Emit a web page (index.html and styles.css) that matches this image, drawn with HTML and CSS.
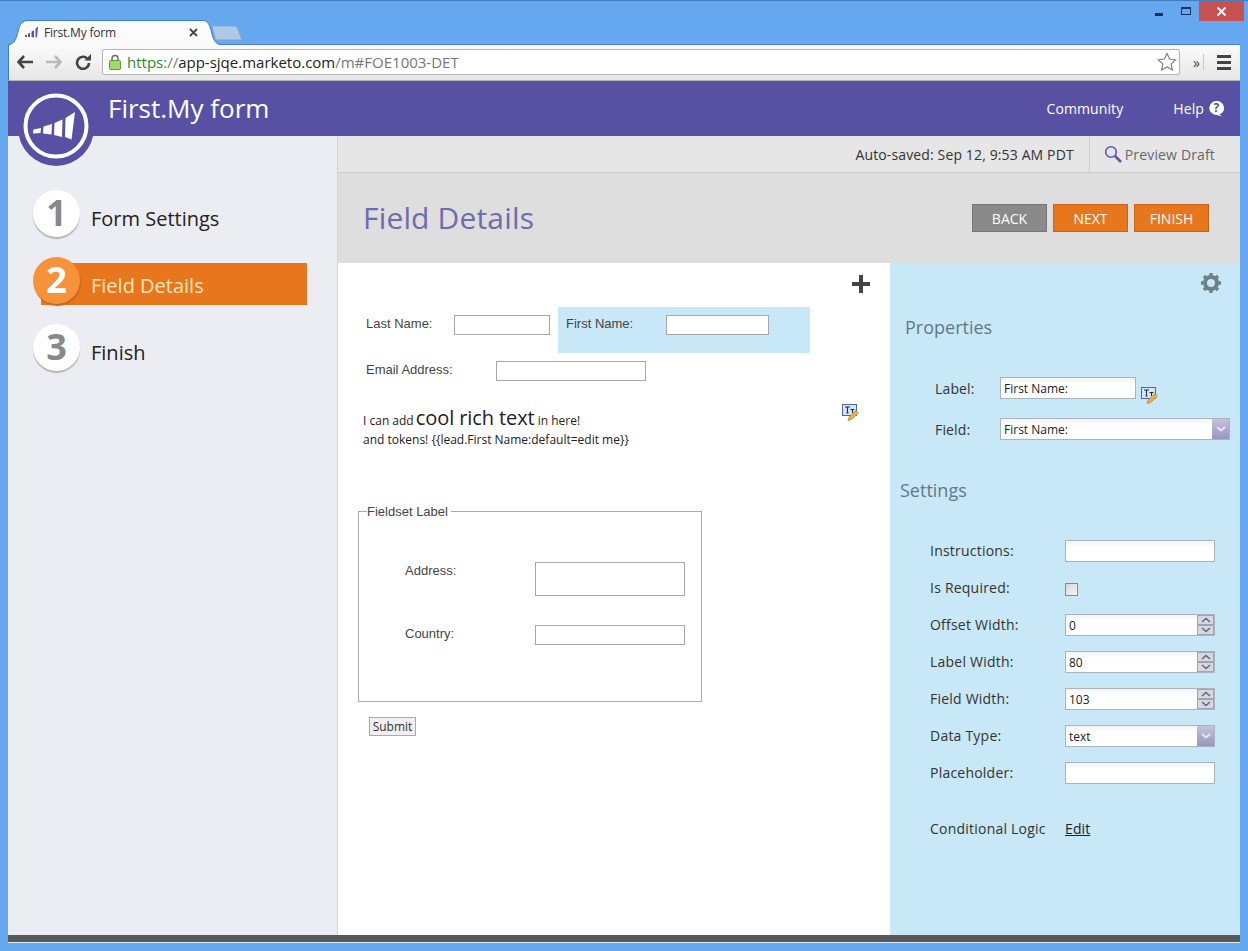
FILE: index.html
```html
<!DOCTYPE html>
<html lang="en">
<head>
<meta charset="utf-8">
<title>First.My form</title>
<link rel="stylesheet" href="styles.css">
</head>
<body>
<div class="window">
  <div class="tabstrip">
    <div class="tab">
      <svg class="tab-shape" width="214" height="25" viewBox="0 0 214 25"><path d="M0 25C6 24 8 20 10 12 12 3 14 .5 21 .5H194C199 .5 201 3 203 10 205 19 207 24 213 25" fill="#fbfbfb" stroke="#3f7fc0" stroke-width="1"/></svg>
      <svg class="tab-fav" width="14" height="14" viewBox="0 0 14 14"><path d="M0 10h2v2H0zM3 8.500l2-.5v4H3zM6.500 6.500l2.500-1v7l-2.500-.5zM10.500 3.500l2.500-2-1 11-1.500-.5z" fill="#5a54a4"/></svg>
      <span class="tab-title">First.My form</span>
      <svg class="tab-close" width="9" height="9" viewBox="0 0 9 9"><path d="M1 1l7 7M8 1L1 8" stroke="#444" stroke-width="1.800"/></svg>
    </div>
    <svg class="newtab" width="33" height="16" viewBox="0 0 33 16"><path d="M1 1H23C25 1 26 2 27 4L31 15H6C5 15 4.500 14 4 13Z" fill="#aec8e6" stroke="#7ea6d3"/></svg>
    <div class="winctl">
      <span class="win-min"></span>
      <span class="win-max"></span>
      <span class="win-close"><svg width="11" height="11" viewBox="0 0 11 11"><path d="M1.500 1.500l8 8M9.500 1.500l-8 8" stroke="#fff" stroke-width="2"/></svg></span>
    </div>
  </div>

  <div class="toolbar">
    <svg class="tb-back" width="16" height="14" viewBox="0 0 16 14"><path d="M7 1L1.500 7 7 13M2 7h14" fill="none" stroke="#444" stroke-width="2.600"/></svg>
    <svg class="tb-fwd" width="16" height="14" viewBox="0 0 16 14"><path d="M9 1l5.500 6L9 13M14 7H0" fill="none" stroke="#b9b9b9" stroke-width="2.600"/></svg>
    <svg class="tb-reload" width="16" height="16" viewBox="0 0 16 16"><path d="M13 5.500A6 6 0 1 0 14 9" fill="none" stroke="#444" stroke-width="2.600"/><path d="M9.500 6.500H16V0Z" fill="#444"/></svg>
    <div class="omnibox">
      <svg class="lock" width="12" height="16" viewBox="0 0 12 16"><path d="M3 7V4.500a3 3 0 0 1 6 0V7" fill="none" stroke="#666" stroke-width="1.400"/><rect x=".5" y="6.500" width="11" height="9" rx="1" fill="#9ed96f" stroke="#5c9a3a"/></svg>
      <span class="url"><span class="url-https">https</span><span class="url-dim">://</span>app-sjqe.marketo.com<span class="url-dim">/m#FOE1003-DET</span></span>
      <svg class="star" width="20" height="20" viewBox="0 0 20 20"><path d="M10 1.500l2.600 5.600 6 .7-4.500 4.100 1.300 6L10 14.900l-5.400 3 1.300-6L1.400 7.800l6-.7z" fill="#fff" stroke="#777" stroke-width="1.100"/></svg>
    </div>
    <span class="tb-more">»</span>
    <span class="tb-sep"></span>
    <span class="tb-menu"><i></i><i></i><i></i></span>
  </div>

  <header class="appbar">
    <div class="logo">
      <svg width="66" height="66" viewBox="0 0 66 66"><circle cx="33" cy="33" r="30.500" fill="none" stroke="#fff" stroke-width="4"/><path d="M10.500 36.500l7.500-1.500-.5 5-7.500.5zM20.500 33.500l8.500-2.500-.5 10.500-8.500-1zM31.500 30l8-3.500-.5 17.500-8-2zM42.500 25l9.500-6-3.500 27.500-6.500-2.500z" fill="#fff"/></svg>
    </div>
    <h1 class="app-title">First.My form</h1>
    <nav class="appnav">
      <a class="appnav-link">Community</a>
      <a class="appnav-help">Help
        <svg width="17" height="17" viewBox="0 0 17 17"><path d="M8.500 1a7.500 7 0 0 1 3 13.400L14 16.500l-5-1.500a7.500 7 0 0 1-.5-14z" fill="#fff"/><text x="8.500" y="12" text-anchor="middle" class="help-q">?</text></svg>
      </a>
    </nav>
  </header>

  <div class="columns">
    <aside class="sidebar">
      <div class="step step-1"><span class="step-num">1</span><span class="step-label">Form Settings</span></div>
      <div class="step step-2 is-active"><span class="step-num">2</span><span class="step-label">Field Details</span></div>
      <div class="step step-3"><span class="step-num">3</span><span class="step-label">Finish</span></div>
    </aside>

    <main class="main">
      <div class="savebar">
        <span class="saved">Auto-saved: Sep 12, 9:53 AM PDT</span>
        <span class="preview">
          <svg width="18" height="18" viewBox="0 0 18 18"><circle cx="7" cy="7" r="5.300" fill="#dfe6f2" stroke="#5d5a9e" stroke-width="1.600"/><path d="M11 11l6 6" stroke="#5d5a9e" stroke-width="2.600"/></svg>
          Preview Draft
        </span>
      </div>
      <div class="titlebar">
        <h2 class="page-title">Field Details</h2>
        <div class="actions">
          <button class="btn btn-back">BACK</button>
          <button class="btn btn-go">NEXT</button>
          <button class="btn btn-go">FINISH</button>
        </div>
      </div>

      <div class="workspace">
        <section class="canvas">
          <svg class="plus" width="18" height="18" viewBox="0 0 18 18"><path d="M7 0h4v7h7v4h-7v7H7v-7H0V7h7z" fill="#444"/></svg>
          <div class="row-names">
            <div class="fcell fcell-last"><label class="flabel">Last Name:</label><input class="finput w-96"></div>
            <div class="fcell fcell-first"><label class="flabel">First Name:</label><input class="finput w-103"></div>
          </div>
          <div class="row-email"><label class="flabel">Email Address:</label><input class="finput w-150"></div>
          <div class="richtext">
            <svg class="rt-edit rt-edit-canvas" width="17" height="17" viewBox="0 0 17 17"><use href="#tt"/></svg>
            <p class="rt-line1">I can add <span class="rt-big">cool rich text</span> in here!</p>
            <p class="rt-line2">and tokens! {{lead.First Name:default=edit me}}</p>
          </div>
          <fieldset class="fset">
            <legend class="fset-legend">Fieldset Label</legend>
            <div class="fset-row fset-address"><label class="flabel">Address:</label><textarea class="finput w-150 ta"></textarea></div>
            <div class="fset-row fset-country"><label class="flabel">Country:</label><input class="finput w-150"></div>
          </fieldset>
          <button class="submit">Submit</button>
        </section>

        <section class="props">
          <svg class="gear" width="22" height="22" viewBox="0 0 22 22"><circle cx="11" cy="11" r="6" fill="none" stroke="#6e7f88" stroke-width="4"/><path d="M11 11V1M11 11V21M11 11H1M11 11H21M11 11L4 4M11 11L18 18M11 11L4 18M11 11L18 4" stroke="#6e7f88" stroke-width="3.400" stroke-dasharray="0 7.500 3 9"/></svg>
          <h3 class="props-h props-h-1">Properties</h3>
          <div class="prop-row prop-label">
            <span class="plabel">Label:</span>
            <div class="box box-136">First Name:</div>
            <svg class="rt-edit" width="17" height="17" viewBox="0 0 17 17"><use href="#tt"/></svg>
          </div>
          <div class="prop-row prop-field">
            <span class="plabel">Field:</span>
            <div class="box box-230">First Name:<span class="drop"><svg width="10" height="6" viewBox="0 0 10 6"><path d="M1 1l4 3.500L9 1" fill="none" stroke="#e9e9f2" stroke-width="1.800"/></svg></span></div>
          </div>
          <h3 class="props-h props-h-2">Settings</h3>
          <div class="settings">
            <span class="slabel">Instructions:</span><div class="box"></div>
            <span class="slabel">Is Required:</span><span class="check"></span>
            <span class="slabel">Offset Width:</span><div class="box">0<span class="spin"><i><svg width="10" height="6" viewBox="0 0 10 6"><path d="M1 5l4-3.500L9 5" fill="none" stroke="#666" stroke-width="1.500"/></svg></i><i><svg width="10" height="6" viewBox="0 0 10 6"><path d="M1 1l4 3.500L9 1" fill="none" stroke="#666" stroke-width="1.500"/></svg></i></span></div>
            <span class="slabel">Label Width:</span><div class="box">80<span class="spin"><i><svg width="10" height="6" viewBox="0 0 10 6"><path d="M1 5l4-3.500L9 5" fill="none" stroke="#666" stroke-width="1.500"/></svg></i><i><svg width="10" height="6" viewBox="0 0 10 6"><path d="M1 1l4 3.500L9 1" fill="none" stroke="#666" stroke-width="1.500"/></svg></i></span></div>
            <span class="slabel">Field Width:</span><div class="box">103<span class="spin"><i><svg width="10" height="6" viewBox="0 0 10 6"><path d="M1 5l4-3.500L9 5" fill="none" stroke="#666" stroke-width="1.500"/></svg></i><i><svg width="10" height="6" viewBox="0 0 10 6"><path d="M1 1l4 3.500L9 1" fill="none" stroke="#666" stroke-width="1.500"/></svg></i></span></div>
            <span class="slabel">Data Type:</span><div class="box">text<span class="drop"><svg width="10" height="6" viewBox="0 0 10 6"><path d="M1 1l4 3.500L9 1" fill="none" stroke="#e9e9f2" stroke-width="1.800"/></svg></span></div>
            <span class="slabel">Placeholder:</span><div class="box"></div>
            <span class="slabel slabel-logic">Conditional Logic</span><a class="edit-link">Edit</a>
          </div>
        </section>
      </div>
    </main>
  </div>
  <div class="footer-bar"></div>
</div>
<svg class="defs" width="0" height="0"><defs><g id="tt"><rect x=".5" y=".5" width="14" height="11" fill="#d7e6f6" stroke="#4a6a9c"/><path d="M3 3h5M5.500 3v6M4.500 9h2M8.500 5.500h4M10.500 5.500V9" fill="none" stroke="#1c2a50" stroke-width="1.100"/><path d="M6 16.500l1-3.500 7-6.500 2.500 2.500-7 6.500z" fill="#eab23c" stroke="#9a7a30" stroke-width=".6"/></g></defs></svg>
</body>
</html>
```
FILE: styles.css
```css
* { box-sizing: border-box; }
html, body { margin: 0; padding: 0; }
body { width: 1248px; height: 951px; overflow: hidden; background: #65a8f0; font-family: "Open Sans", sans-serif; color: #222; }
.window { height: 951px; padding: 0 8px; display: flex; flex-direction: column; border-top: 1px solid #3f7fc0; }
.defs { position: absolute; }

/* tab strip */
.tabstrip { height: 43px; flex: none; display: flex; align-items: flex-end; position: relative; }
.tab { position: relative; z-index: 1; width: 203px; height: 24px; display: flex; align-items: center; flex: none; margin-left: 1px; }
.tab-shape { position: absolute; left: -1px; top: 0; }
.tab-fav { position: relative; margin-left: 16px; }
.tab-title { position: relative; margin-left: 5px; font-size: 12px; letter-spacing: -.2px; color: #333; width: 145px; }
.tab-close { position: relative; }
.newtab { flex: none; margin: 0 0 3px -1px; }
.winctl { position: absolute; top: 0; right: -4px; display: flex; align-items: flex-start; }
.win-min { width: 8px; height: 3px; background: #16325c; margin: 12px 18px 0 0; }
.win-max { width: 10px; height: 8px; border: 1px solid #16325c; border-top-width: 2px; margin: 6px 8px 0 0; }
.win-close { width: 45px; height: 20px; background: #c75050; display: flex; align-items: center; justify-content: center; }

/* toolbar */
.toolbar { height: 37px; flex: none; display: flex; align-items: center; background: linear-gradient(#fbfbfb, #e6e6e6); padding: 0 0 1px 8px; border-top: 1px solid #4a86c5; border-bottom: 1px solid #b5b5b5; border-left: 1px solid #3f7fc0; }
.tb-fwd { margin-left: 13px; }
.tb-reload { margin-left: 13px; }
.omnibox { margin-left: 11px; width: 1078px; height: 26px; display: flex; align-items: center; background: #fff; border: 1px solid #b4b4b4; border-radius: 2px; padding-left: 6px; position: relative; }
.url { margin-left: 6px; font-size: 15px; color: #222; white-space: nowrap; }
.url-https { color: #2a8a2a; }
.url-dim { color: #777; }
.star { margin-left: auto; margin-right: 2px; }
.tb-more { margin-left: 13px; font-size: 14px; color: #444; }
.tb-sep { width: 1px; height: 16px; background: #c9c9c9; margin-left: 3px; }
.tb-menu { margin-left: 13px; width: 14px; display: flex; flex-direction: column; gap: 3px; }
.tb-menu i { height: 3px; background: #444; display: block; }

/* app bar */
.appbar { height: 55px; flex: none; background: #5851a3; display: flex; align-items: center; position: relative; padding-left: 100px; }
.logo { position: absolute; left: 10px; top: 9px; width: 76px; height: 76px; border-radius: 50%; background: #5851a3; display: flex; align-items: center; justify-content: center; z-index: 2; }
.logo svg { margin-top: -5px; }
.app-title { margin: 0; font-size: 26px; font-weight: 400; color: #fff; line-height: 55px; }
.appnav { margin-left: auto; display: flex; align-items: center; color: #fff; font-size: 14px; letter-spacing: .1px; padding-right: 15px; }
.appnav-help { margin-left: 50px; display: flex; align-items: center; gap: 4px; }
.help-q { font: 700 12px "Open Sans", sans-serif; fill: #5851a3; }

/* layout */
.columns { flex: 1; min-height: 0; display: flex; }
.sidebar { width: 330px; flex: none; background: #ecedf2; border-right: 1px solid #d4d4d4; padding-top: 53px; }
.main { flex: 1; min-width: 0; display: flex; flex-direction: column; }

/* steps */
.step { position: relative; height: 48px; margin: 0 0 19px 25px; display: flex; align-items: center; }
.step-num { width: 47px; height: 47px; padding-bottom: 2px; flex: none; border-radius: 50%; background: #fff; box-shadow: 0 2px 1px #b5b5b5; color: #888; font-size: 36px; font-weight: 700; display: flex; align-items: center; justify-content: center; position: relative; z-index: 1; }
.step-label { margin-left: 11px; font-size: 20px; color: #222; position: relative; top: 5px; z-index: 1; }
.step-2 .step-num { background: #f5923a; color: #fff; box-shadow: 1px 2px 1px #c9681a; }
.step-2 .step-label { color: #fde6bd; }
.step-2::before { content: ""; position: absolute; left: 8px; width: 266px; height: 42px; top: 7px; background: #e8761c; }

/* save bar */
.savebar { height: 37px; flex: none; background: #e6e6e6; border-bottom: 1px solid #cfcfcf; display: flex; justify-content: flex-end; align-items: center; font-size: 14px; color: #333; }
.saved { padding-right: 15px; letter-spacing: .13px; }
.preview { height: 36px; border-left: 1px solid #cfcfcf; display: flex; align-items: center; gap: 3px; padding: 0 25px 0 14px; letter-spacing: .15px; color: #666; }

/* title bar */
.titlebar { height: 90px; flex: none; background: #dedede; display: flex; align-items: center; justify-content: space-between; padding: 0 31px 0 25px; }
.page-title { margin: 0 0 2px; font-size: 30px; font-weight: 400; letter-spacing: .16px; color: #6f6bb0; }
.actions { display: flex; gap: 6px; }
.btn { width: 75px; height: 28px; font: 400 14px "Open Sans", sans-serif; color: #fff; padding: 0; border: 1px solid; }
.btn-back { background: #8a8a8a; border-color: #777; }
.btn-go { background: #e8761c; border-color: #c9641a; }

/* workspace */
.workspace { flex: 1; min-height: 0; display: flex; }
.canvas { width: 552px; flex: none; background: #fff; position: relative; padding: 44px 0 0 20px; }
.plus { position: absolute; left: 514px; top: 12px; }
.flabel { font: 13px/16px "Liberation Sans", sans-serif; color: #444; padding-top: 1px; }
.finput { display: block; height: 20px; border: 1px solid #a8a8a8; background: #fff; padding: 0; margin: 0; outline: 0; border-radius: 0; }
.w-96 { width: 96px; }
.w-103 { width: 103px; }
.w-150 { width: 150px; }
.row-names { display: flex; height: 46px; }
.fcell { display: flex; align-items: flex-start; }
.fcell-last { padding: 8px 0 0 8px; width: 200px; }
.fcell-last .flabel { width: 88px; }
.fcell-first { width: 252px; height: 46px; background: #c8e8f7; padding: 8px 0 0 8px; }
.fcell-first .flabel { width: 100px; }
.row-email { display: flex; margin: 8px 0 0 8px; }
.row-email .flabel { width: 130px; }
.richtext { position: relative; margin: 26px 0 0 5px; color: #222; height: 52px; }
.rt-edit-canvas { position: absolute; left: 479px; top: -3px; }
.rt-line1 { margin: 0; font-size: 12px; line-height: 22px; }
.rt-big { font-size: 20px; letter-spacing: -.1px; margin-left: -1px; }
.rt-line2 { margin: -1px 0 0; font-size: 12px; line-height: 17px; }
.fset { margin: 45px 0 0 0; padding: 0; width: 344px; height: 198px; border: 1px solid #aaa; position: relative; }
.fset-legend { font: 13px/14px "Liberation Sans", sans-serif; color: #444; padding: 1px 3px 0 0; margin-left: 8px; }
.fset-row { display: flex; align-items: flex-start; padding-left: 46px; }
.fset-row .flabel { width: 130px; }
.fset-address { margin-top: 43px; }
.fset-country { margin-top: 29px; }
.ta { height: 34px; resize: none; }
.submit { display: block; margin: 15px 0 0 11px; width: 47px; height: 19px; padding: 0; font: 12px "Open Sans", sans-serif; color: #333; background: #efefef; border: 1px solid #aaa; border-radius: 0; }

/* properties */
.props { flex: 1; background: #c8e8f7; position: relative; }
.gear { position: absolute; left: 310px; top: 9px; }
.props-h { margin: 0; font-size: 18px; font-weight: 400; color: #5e7a85; }
.props-h-1 { padding: 52px 0 0 15px; line-height: 25px; }
.props-h-2 { padding: 38px 0 0 10px; line-height: 25px; }
.prop-row { display: flex; align-items: center; padding-left: 45px; height: 22px; font-size: 14px; letter-spacing: .15px; color: #333; }
.prop-label { margin-top: 37px; }
.prop-field { margin-top: 19px; }
.plabel { width: 65px; }
.box { position: relative; height: 22px; background: linear-gradient(#f3f3f3, #fff 6px); border: 1px solid #a9b4bf; font-size: 12px; letter-spacing: 0; line-height: 22px; padding-left: 3px; color: #222; }
.box-136 { width: 136px; }
.box-230 { width: 230px; }
.prop-label .rt-edit { margin: 15px 0 0 5px; }
.drop { position: absolute; right: 0; top: 0; width: 17px; height: 20px; background: linear-gradient(#c4c3da, #9896bf); display: flex; align-items: center; justify-content: center; }
.spin { position: absolute; right: 0; top: 0; width: 17px; height: 20px; display: flex; flex-direction: column; }
.spin i { flex: 1; background: #d6d7e2; border: 1px solid #a0a3b8; display: flex; align-items: center; justify-content: center; }
.settings { display: grid; grid-template-columns: 135px 150px; grid-auto-rows: 22px; row-gap: 15px; align-items: center; padding: 37px 0 0 40px; font-size: 14px; color: #333; }
.slabel { line-height: 22px; letter-spacing: .22px; }
.check { width: 13px; height: 13px; margin-top: 2px; border: 1px solid #8a8a8a; background: linear-gradient(135deg, #d8d8d8, #f4f4f4); }
.slabel-logic { margin-top: 37px; }
.edit-link { margin-top: 37px; color: #222; text-decoration: underline; line-height: 22px; letter-spacing: .1px; }

.footer-bar { flex: none; height: 7px; background: #585858; }
.window::after { content: ""; flex: none; height: 8px; border-top: 1px solid #dce9f7; }
```
